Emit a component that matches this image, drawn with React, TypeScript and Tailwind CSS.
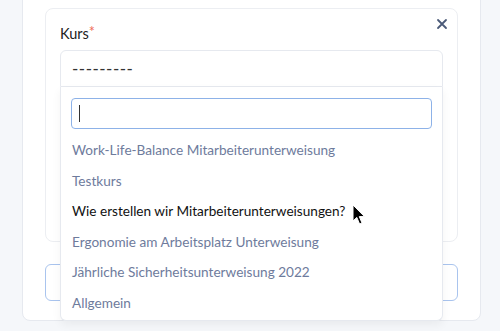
import React from "react";

const options = [
  "Work-Life-Balance Mitarbeiterunterweisung",
  "Testkurs",
  "Wie erstellen wir Mitarbeiterunterweisungen?",
  "Ergonomie am Arbeitsplatz Unterweisung",
  "Jährliche Sicherheitsunterweisung 2022",
  "Allgemein",
];

function Cursor() {
  return (
    <svg
      className="pointer-events-none absolute left-[291px] top-[117px]"
      width="14"
      height="22"
      viewBox="0 0 14 22"
    >
      <path
        d="M1 1 L1 17 L4.8 13.4 L7.6 20 L10 19 L7.3 12.6 L12.5 12.6 Z"
        fill="#000"
        stroke="#fff"
        strokeWidth="1"
        strokeLinejoin="round"
      />
    </svg>
  );
}

export default function App() {
  return (
    <div
      className="h-[331px] overflow-hidden bg-[#f5f7fa] pl-[22px] pr-[19px]"
      style={{ fontFamily: "Lato, 'Open Sans', sans-serif" }}
    >
      <div className="-mt-[16px] rounded-lg border border-[#e6e9ef] bg-white px-[22px] pb-[19px] pt-[23px]">
        <div className="relative h-[234px] rounded-lg border border-[#eceef2] px-[14px] pt-[15px]">
          <button className="absolute right-[9px] top-[9px] text-[#4b5a78]">
            <svg width="12" height="12" viewBox="0 0 12 12">
              <path d="M2 2 L10 10 M10 2 L2 10" stroke="currentColor" strokeWidth="1.8" strokeLinecap="round" />
            </svg>
          </button>
          <label className="block text-[14.5px] leading-5 text-[#222]">
            Kurs<span className="relative -top-[2px] text-[#ef6b57]">*</span>
          </label>
          <div className="relative mt-[6px]">
            <div className="flex h-[37px] items-center rounded-t-md border border-[#e6e9ef] pl-[11px] text-[17px] tracking-[0.5px] text-[#333]">
              ---------
            </div>
            <div className="absolute left-0 right-0 top-full z-10 h-[234px] rounded-b-md border border-t-0 border-[#e6e9ef] bg-white shadow-[0_4px_10px_rgba(0,0,0,0.05)]">
              <div className="px-[10px] pt-[11px]">
                <div className="flex h-[31px] items-center rounded-[4px] border border-[#8db2e8] pl-[7px]">
                  <div className="h-[17px] w-px bg-[#333]" />
                </div>
              </div>
              <ul className="mt-[6px]">
                {options.map((o, i) => (
                  <li
                    key={o}
                    className={`flex h-[30.5px] items-center pl-[11px] text-[13.6px] ${
                      i === 2 ? "text-[#111]" : "text-[#6e7b9c]"
                    }`}
                  >
                    {o}
                  </li>
                ))}
              </ul>
              <Cursor />
            </div>
          </div>
        </div>
        <div className="mt-[22px] h-[37px] rounded-md border border-[#a9c4ee]" />
      </div>
    </div>
  );
}
